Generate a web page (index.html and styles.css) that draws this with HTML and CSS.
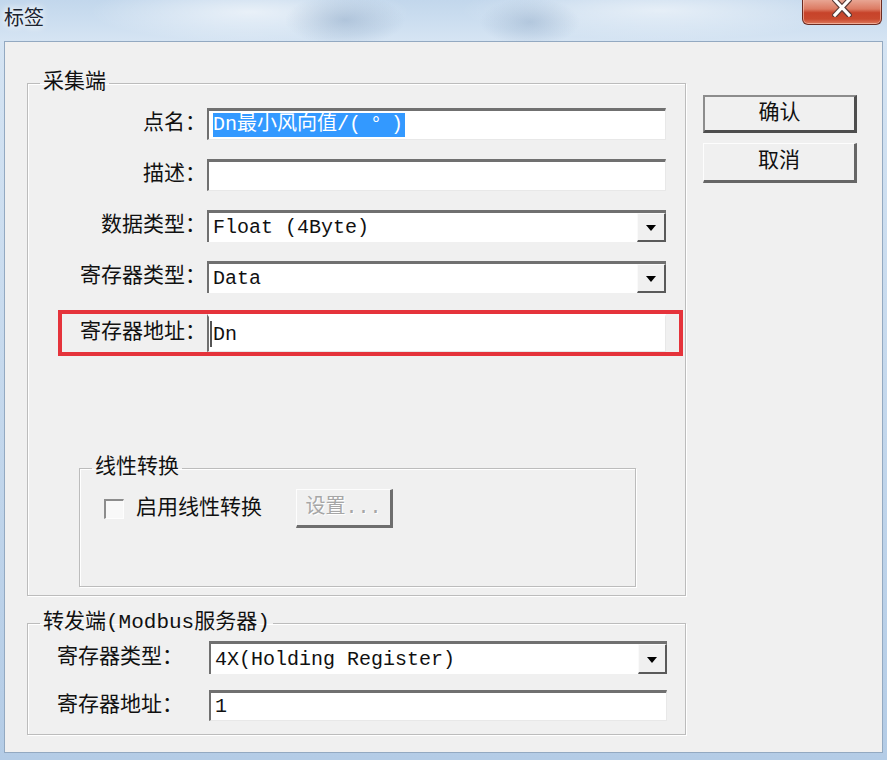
FILE: index.html
```html
<!DOCTYPE html>
<html lang="zh-CN">
<head>
<meta charset="utf-8">
<title>标签</title>
<link rel="stylesheet" href="styles.css">
</head>
<body>
<div class="window">
  <div class="titlebar">
    <span class="title">标签</span>
    <div class="close">
      <svg width="20" height="17" viewBox="0 0 20 17">
        <path d="M3 0 L17 15 M17 0 L3 15" stroke="#5a3a36" stroke-width="5.5" stroke-linecap="square" fill="none"/>
        <path d="M3 0 L17 15 M17 0 L3 15" stroke="#ffffff" stroke-width="3.2" stroke-linecap="square" fill="none"/>
      </svg>
    </div>
  </div>
  <div class="frame">
    <div class="client">
      <div class="main">
        <fieldset class="group g-collect">
          <legend>采集端</legend>
          <div class="rows">
            <div class="row">
              <span class="lbl">点名：</span>
              <div class="edit"><span class="sel">Dn最小风向值/(<span class="deg">°</span>)</span></div>
            </div>
            <div class="row">
              <span class="lbl">描述：</span>
              <div class="edit"></div>
            </div>
            <div class="row">
              <span class="lbl">数据类型：</span>
              <div class="edit combo"><span class="val">Float (4Byte)</span><span class="drop"><span class="arrow"></span></span></div>
            </div>
            <div class="row">
              <span class="lbl">寄存器类型：</span>
              <div class="edit combo"><span class="val">Data</span><span class="drop"><span class="arrow"></span></span></div>
            </div>
            <div class="row marked">
              <span class="lbl">寄存器地址：</span>
              <div class="edit tall"><span class="caret"></span>Dn</div>
            </div>
          </div>
          <fieldset class="group g-linear">
            <legend>线性转换</legend>
            <div class="check-row">
              <span class="checkbox"></span>
              <span class="check-label">启用线性转换</span>
              <button class="btn btn-disabled" type="button">设置...</button>
            </div>
          </fieldset>
        </fieldset>
        <fieldset class="group g-forward">
          <legend>转发端(Modbus服务器)</legend>
          <div class="rows2">
            <div class="row2">
              <span class="lbl2">寄存器类型：</span>
              <div class="edit combo c2"><span class="val">4X(Holding Register)</span><span class="drop"><span class="arrow"></span></span></div>
            </div>
            <div class="row2">
              <span class="lbl2">寄存器地址：</span>
              <div class="edit">1</div>
            </div>
          </div>
        </fieldset>
      </div>
      <div class="side">
        <button class="btn btn-default" type="button">确认</button>
        <button class="btn btn-normal" type="button">取消</button>
      </div>
    </div>
  </div>
</div>
</body>
</html>
```

FILE: styles.css
```css
* { box-sizing: border-box; }
html, body { margin: 0; padding: 0; }
body {
  width: 887px;
  height: 760px;
  overflow: hidden;
  background: #b9d0e8;
  font-family: "Liberation Mono", "Noto Sans CJK SC", monospace;
  color: #111;
}
.window {
  width: 887px;
  height: 760px;
  display: flex;
  flex-direction: column;
  background:
    radial-gradient(ellipse 60px 26px at 345px 20px, rgba(130,158,190,0.45), rgba(130,158,190,0) 100%),
    radial-gradient(ellipse 50px 24px at 530px 22px, rgba(130,158,190,0.4), rgba(130,158,190,0) 100%),
    radial-gradient(ellipse 160px 30px at 250px 12px, rgba(255,255,255,0.6), rgba(255,255,255,0) 100%),
    radial-gradient(ellipse 200px 30px at 660px 10px, rgba(255,255,255,0.55), rgba(255,255,255,0) 100%),
    linear-gradient(to bottom, #c2d7ec 0%, #d5e4f3 40px, #b4cce6 100%);
}
.titlebar {
  height: 41px;
  display: flex;
  justify-content: space-between;
  align-items: flex-start;
  padding: 0 5px 0 4px;
}
.title {
  font-family: "Noto Sans CJK SC", sans-serif;
  font-size: 20px;
  line-height: 24px;
  margin-top: 5px;
  color: #1c2430;
  text-shadow: 0 0 6px #fff, 0 0 10px rgba(255,255,255,0.9);
}
.close {
  width: 80px;
  height: 26px;
  margin-top: -1px;
  border: 1px solid #6b2c22;
  border-top: none;
  border-radius: 0 0 6px 6px;
  background: linear-gradient(to bottom, #e9aa98 0%, #dc7b63 40%, #c7432a 55%, #c9492e 80%, #de7a5e 100%);
  box-shadow: inset 0 0 0 1px rgba(255,215,200,0.55);
  display: flex;
  justify-content: center;
  align-items: flex-start;
  padding-top: 1px;
}
.frame {
  flex: 1;
  padding: 0 4px 7px 4px;
}
.client {
  height: 712px;
  background: #f0f0f0;
  border: 1px solid #93a9c1;
  display: flex;
  align-items: flex-start;
  padding: 29px 0 0 22px;
}
.main {
  width: 659px;
  display: flex;
  flex-direction: column;
}
.group {
  margin: 0;
  padding: 0;
  min-width: 0;
  border: 1px solid #bcbcbc;
  box-shadow: 1px 1px 0 #fff, inset 1px 1px 0 #fff;
}
.group > legend {
  font-size: 21px;
  line-height: 24px;
  padding: 0 3px;
  margin-left: 12px;
  color: #111;
}
.group.g-collect { padding: 13px 0 8px 0; }
.rows {
  display: flex;
  flex-direction: column;
  gap: 19px;
}
.row {
  display: grid;
  grid-template-columns: 179px 459px;
  align-items: center;
  position: relative;
}
.lbl {
  font-size: 21px;
  line-height: 24px;
  text-align: right;
  white-space: nowrap;
  padding-right: 1px;
}
.edit {
  height: 32px;
  background: #fff;
  border-style: solid;
  border-width: 3px 1px 1px 2px;
  border-color: #707070 #e8e8e8 #e8e8e8 #707070;
  font-size: 20px;
  padding-left: 4px;
  display: flex;
  align-items: center;
  white-space: nowrap;
  overflow: hidden;
  color: #111;
}
.edit.tall { height: 38px; padding-left: 1px; border-top-color: #fff; }
.caret {
  width: 2px;
  height: 26px;
  background: #555;
  margin-right: 1px;
}
.row.marked { margin-top: 2px; }
.row.marked::after {
  content: "";
  position: absolute;
  top: -4px;
  bottom: -4px;
  left: 30px;
  right: 2px;
  border: 4px solid #e5333b;
  pointer-events: none;
}
.sel {
  background: #3399ff;
  color: #fff;
  line-height: 24px;
  padding-right: 2px;
}
.deg { display: inline-block; width: 30px; text-align: center; }
.combo { border-right-width: 0; border-bottom-width: 0; }
.combo .val { flex: 1; }
.drop {
  width: 29px;
  height: 100%;
  background: #f0f0f0;
  border-style: solid;
  border-width: 1px 2px 2px 1px;
  border-color: #fafafa #5a5a5a #5a5a5a #fafafa;
  display: flex;
  align-items: center;
  justify-content: center;
}
.arrow {
  width: 0;
  height: 0;
  border-left: 5px solid transparent;
  border-right: 5px solid transparent;
  border-top: 6px solid #000;
  margin-top: 2px;
}
.group.g-linear {
  margin: 104px 0 0 51px;
  width: 557px;
  padding: 9px 0 58px 0;
}
.check-row {
  display: flex;
  align-items: center;
  height: 39px;
  padding-left: 24px;
}
.checkbox {
  width: 20px;
  height: 20px;
  background: #f8f8f8;
  border-style: solid;
  border-width: 2px 1px 1px 2px;
  border-color: #8c8c8c #fdfdfd #fdfdfd #8c8c8c;
}
.check-label {
  font-size: 21px;
  line-height: 24px;
  margin-left: 12px;
}
.btn {
  font-family: "Liberation Mono", "Noto Sans CJK SC", monospace;
  font-size: 21px;
  line-height: 24px;
  background: #f0f0f0;
  color: #111;
  padding: 0;
  margin: 0;
  border-style: solid;
  display: flex;
  align-items: center;
  justify-content: center;
}
.btn.btn-disabled {
  width: 97px;
  height: 39px;
  margin-left: 34px;
  color: #a6a6a6;
  text-shadow: 1px 1px 0 #fff;
  border-width: 1px 3px 3px 1px;
  border-color: #fdfdfd #6e6e6e #6e6e6e #fdfdfd;
  font-size: 20px;
}
.group.g-forward {
  margin-top: 15px;
  padding: 6px 0 13px 0;
}
.rows2 {
  display: flex;
  flex-direction: column;
  gap: 16px;
  padding-left: 29px;
}
.row2 {
  display: grid;
  grid-template-columns: 152px 458px;
  align-items: center;
}
.lbl2 {
  font-size: 21px;
  line-height: 24px;
  white-space: nowrap;
}
.row2 .edit { height: 31px; }
.row2 .edit.c2 { height: 33px; }
.side {
  margin: 24px 0 0 17px;
  display: flex;
  flex-direction: column;
  gap: 10px;
}
.btn.btn-default {
  width: 154px;
  height: 38px;
  border-width: 2px 3px 3px 2px;
  border-color: #8c8c8c #4e4e4e #4e4e4e #8c8c8c;
}
.btn.btn-normal {
  width: 154px;
  height: 40px;
  border-width: 1px 3px 3px 1px;
  border-color: #fdfdfd #666 #666 #fdfdfd;
}
```
